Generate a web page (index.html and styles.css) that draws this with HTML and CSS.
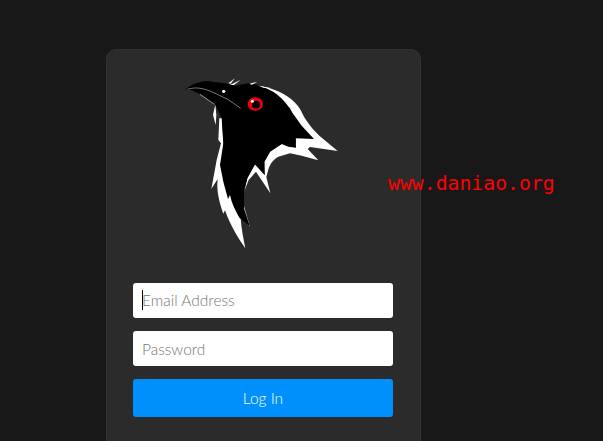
FILE: index.html
```html
<!DOCTYPE html>
<html lang="en">
<head>
<meta charset="utf-8">
<title>Log In</title>
<link rel="stylesheet" href="styles.css">
</head>
<body>
<main class="card">
  <div class="logo-wrap">
    <svg class="logo" viewBox="0 0 540 570" aria-label="Raven logo">
      <path class="white" d="M268 62L300 70C338 82 372 102 392 135C405 165 425 190 448 212L503 258L420 246L413 252L445 286L395 272L360 265L325 275C308 284 298 300 294 318L289 336L301 385L258 320L236 345L222 380L232 340L255 298L284 330L283 290L300 260L335 237L378 235L377 220L400 215L360 130L320 92Z"/>
      <path class="white" d="M136 118L129 150L137 180L139 150ZM148 160L145 225L153 235L140 285L130 340L124 372L143 342C139 375 147 410 160 446L165 436C180 480 205 520 226 550C220 520 214 490 212 460L240 485L215 400L180 380L165 320L156 160Z"/>
      <path class="black" d="M46 75C60 60 85 50 110 48L165 55L195 62L240 54L285 68C320 82 345 105 365 140L395 182L432 222L377 220L378 248L355 245L335 237L300 260L283 290L284 330L255 298L232 340L222 380L222 430L240 485L208 458C195 435 185 415 180 390L174 402L160 350L150 300L160 235L155 160L135 118L90 88L64 75Z"/>
      <path class="white" d="M175 55L195 40L182 56ZM180 60L212 44L192 60ZM238 56L262 50L246 59ZM266 62L305 70L280 68Z"/>
      <path class="beak-line" d="M52 73C75 66 95 68 125 80L175 104L212 130"/>
      <path class="throat-line" d="M90 88L133 118"/>
      <circle class="white" cx="161" cy="79" r="5"/>
      <ellipse class="red" cx="256" cy="117" rx="23" ry="20"/>
      <circle class="black" cx="258" cy="119" r="12"/>
      <circle class="white" cx="247" cy="109" r="4.5"/>
    </svg>
  </div>
  <form class="form">
    <div class="field">
      <input class="input input-email" type="text" placeholder="Email Address">
      <span class="caret"></span>
    </div>
    <input class="input" type="password" placeholder="Password">
    <button class="submit" type="button">Log In</button>
  </form>
</main>
<div class="watermark">www.daniao.org</div>
</body>
</html>
```
FILE: styles.css
```css
html, body {
  margin: 0;
  height: 100%;
  overflow: hidden;
}
body {
  background: #181818;
  font-family: "Lato", sans-serif;
  font-weight: 300;
}
.card {
  box-sizing: border-box;
  width: 315px;
  height: 400px;
  margin: 49px 0 0 106px;
  padding: 15px 26px 0;
  background: #2b2b2b;
  border: 1px solid #333;
  border-radius: 10px;
}
.logo-wrap {
  height: 218px;
  margin-left: 37px;
}
.logo {
  display: block;
  width: 180px;
  height: 190px;
}
.white { fill: #fff; }
.black { fill: #000; }
.red { fill: #f0000f; }
.beak-line {
  fill: none;
  stroke: #b0b0b0;
  stroke-width: 2;
}
.throat-line {
  fill: none;
  stroke: #d0d0d0;
  stroke-width: 2;
}
.form {
  display: flex;
  flex-direction: column;
  gap: 13px;
}
.field {
  position: relative;
  display: flex;
}
.input {
  box-sizing: border-box;
  width: 260px;
  height: 35px;
  padding: 0 9px;
  border: 0;
  border-radius: 3px;
  background: #fff;
  font: 300 15.5px "Lato", sans-serif;
  outline: none;
}
.input-email {
  padding-bottom: 2px;
}
.input::placeholder {
  color: #777;
  opacity: 1;
}
.caret {
  position: absolute;
  left: 9px;
  top: 7px;
  width: 1px;
  height: 20px;
  background: #000;
}
.submit {
  height: 38px;
  width: 260px;
  padding: 0;
  border: 0;
  border-radius: 3px;
  background: #0090fb;
  color: #fff;
  font: 300 15.5px "Lato", sans-serif;
}
.watermark {
  position: absolute;
  left: 388px;
  top: 171px;
  color: #f00;
  font: 19.8px/26px "DejaVu Sans Mono", monospace;
}
```
